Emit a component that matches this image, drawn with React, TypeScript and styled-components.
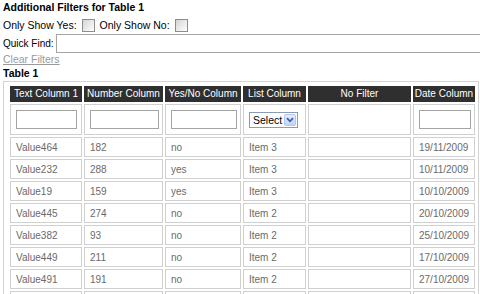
import React from "react";
import styled, { createGlobalStyle } from "styled-components";

const Global = createGlobalStyle`
  html, body { margin: 0; padding: 0; background: #fff; }
  body {
    font-family: "Liberation Sans", Arial, sans-serif;
    font-size: 10px;
    color: #000;
  }
`;

const Page = styled.div`
  padding: 0 0 0 3px;
  width: 477px;
  height: 294px;
  overflow: hidden;
`;

const Heading = styled.div`
  font-weight: bold;
  font-size: 10.5px;
  line-height: 15px;
  height: 15px;
`;

const FilterLine = styled.div`
  display: flex;
  align-items: center;
  height: 18px;
  margin-top: 1px;
  font-size: 10.5px;
`;

const Label = styled.span`
  white-space: nowrap;
`;

const Check = styled.span`
  display: inline-block;
  box-sizing: border-box;
  width: 13px;
  height: 13px;
  margin: 0 5px;
  border: 1px solid #8d8d8d;
  background: linear-gradient(135deg, #d4d4d4 0%, #f2f2f2 70%, #ffffff 100%);
`;

const QuickLine = styled.div`
  display: flex;
  align-items: center;
  height: 19px;
  font-size: 10px;
`;

const QuickInput = styled.input`
  box-sizing: border-box;
  height: 19px;
  flex: 1;
  margin: 0 -10px 0 2px;
  padding: 0 2px;
  border: 1px solid #a4a4a4;
  outline: none;
`;

const ClearLink = styled.a`
  display: block;
  line-height: 13px;
  height: 13px;
  font-size: 10.5px;
  color: #9a9a9a;
  text-decoration: underline;
  cursor: pointer;
`;

const Frame = styled.div`
  border: 1px solid #d3d3d3;
  padding: 2px 0 0 4px;
  width: 470px;
`;

const Grid = styled.table`
  border-collapse: separate;
  border-spacing: 2px;
  table-layout: fixed;
  width: 469px;
`;

const Head = styled.th<{ $w: number }>`
  box-sizing: border-box;
  width: ${(p) => p.$w}px;
  height: 16px;
  padding: 0;
  background: #2f2f2f;
  border: 1px solid #2f2f2f;
  color: #fff;
  font-weight: normal;
  font-size: 10px;
  line-height: 14px;
  text-align: center;
  white-space: nowrap;
  overflow: hidden;
`;

const FilterCell = styled.td`
  box-sizing: border-box;
  height: 31px;
  padding: 0 5px;
  border: 1px solid #d0d0d0;
  vertical-align: middle;
`;

const FilterInput = styled.input<{ $w: number }>`
  display: block;
  box-sizing: border-box;
  width: ${(p) => p.$w}px;
  height: 19px;
  padding: 0 2px;
  border: 1px solid #a4a4a4;
  outline: none;
`;

const SelectBox = styled.div`
  display: flex;
  align-items: center;
  justify-content: space-between;
  box-sizing: border-box;
  width: 49px;
  height: 16px;
  border: 1px solid #8a9cb4;
  padding: 0 1px 0 3px;
  font-size: 10.5px;
  color: #000;
  background: #fff;
`;

const ArrowBtn = styled.span`
  display: flex;
  align-items: center;
  justify-content: center;
  box-sizing: border-box;
  width: 12px;
  height: 12px;
  border: 1px solid #b4c6ef;
  border-radius: 2px;
  background: linear-gradient(#e6eefd, #c1d2fa);
`;

const Cell = styled.td`
  box-sizing: border-box;
  height: 20px;
  padding: 1px 5px 0;
  border: 1px solid #d0d0d0;
  color: #6a6a6a;
  line-height: 17px;
  white-space: nowrap;
  overflow: hidden;
`;

const cols = [
  { title: "Text Column 1", w: 72 },
  { title: "Number Column", w: 79 },
  { title: "Yes/No Column", w: 76 },
  { title: "List Column", w: 63 },
  { title: "No Filter", w: 103 },
  { title: "Date Column", w: 62 },
];

const rows = [
  ["Value464", "182", "no", "Item 3", "", "19/11/2009"],
  ["Value232", "288", "yes", "Item 3", "", "10/11/2009"],
  ["Value19", "159", "yes", "Item 3", "", "10/10/2009"],
  ["Value445", "274", "no", "Item 2", "", "20/10/2009"],
  ["Value382", "93", "no", "Item 2", "", "25/10/2009"],
  ["Value449", "211", "no", "Item 2", "", "17/10/2009"],
  ["Value491", "191", "no", "Item 2", "", "27/10/2009"],
  ["", "", "", "", "", ""],
];

export default function App() {
  return (
    <>
      <Global />
      <Page>
        <Heading>Additional Filters for Table 1</Heading>
        <FilterLine>
          <Label>Only Show Yes:</Label>
          <Check />
          <Label>Only Show No:</Label>
          <Check />
        </FilterLine>
        <QuickLine>
          <Label>Quick Find:</Label>
          <QuickInput />
        </QuickLine>
        <ClearLink>Clear Filters</ClearLink>
        <Heading>Table 1</Heading>
        <Frame>
          <Grid>
            <thead>
              <tr>
                {cols.map((c) => (
                  <Head key={c.title} $w={c.w}>
                    {c.title}
                  </Head>
                ))}
              </tr>
            </thead>
            <tbody>
              <tr>
                <FilterCell>
                  <FilterInput $w={61} />
                </FilterCell>
                <FilterCell>
                  <FilterInput $w={69} />
                </FilterCell>
                <FilterCell>
                  <FilterInput $w={66} />
                </FilterCell>
                <FilterCell>
                  <SelectBox>
                    <span>Select</span>
                    <ArrowBtn>
                      <svg width="8" height="6" viewBox="0 0 8 6">
                        <path d="M1 1.2 L4 4.3 L7 1.2" fill="none" stroke="#3b5ea8" strokeWidth="1.7" />
                      </svg>
                    </ArrowBtn>
                  </SelectBox>
                </FilterCell>
                <FilterCell />
                <FilterCell>
                  <FilterInput $w={52} />
                </FilterCell>
              </tr>
              {rows.map((r, ri) => (
                <tr key={ri}>
                  {r.map((v, i) => (
                    <Cell key={i}>{v}</Cell>
                  ))}
                </tr>
              ))}
            </tbody>
          </Grid>
        </Frame>
      </Page>
    </>
  );
}
